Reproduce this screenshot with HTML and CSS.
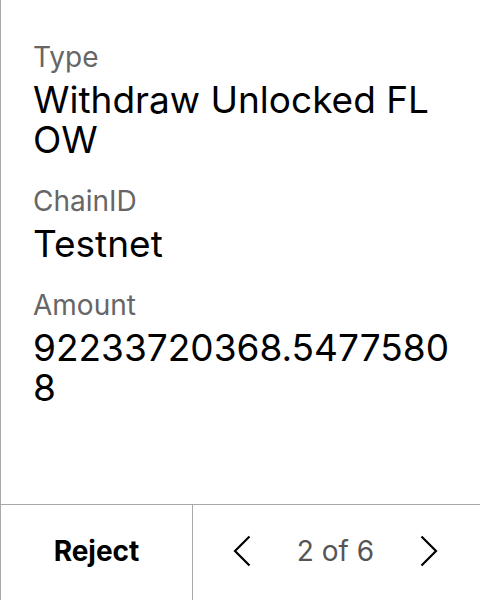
FILE: index.html
```html
<!DOCTYPE html>
<html>
<head>
<meta charset="utf-8">
<link rel="stylesheet" href="styles.css">
</head>
<body>
<div class="screen">
  <div class="details">
    <div class="field">
      <div class="label">Type</div>
      <div class="value">Withdraw Unlocked FLOW</div>
    </div>
    <div class="field">
      <div class="label">ChainID</div>
      <div class="value">Testnet</div>
    </div>
    <div class="field">
      <div class="label">Amount</div>
      <div class="value">92233720368.54775808</div>
    </div>
  </div>
  <div class="footer">
    <div class="reject">Reject</div>
    <div class="pager">
      <svg class="chev" width="20" height="32" viewBox="0 0 20 32"><path d="M17.5 1.5 L3 16 L17.5 30.5" fill="none" stroke="#000" stroke-width="2.2"/></svg>
      <span class="count">2 of 6</span>
      <svg class="chev" width="20" height="32" viewBox="0 0 20 32"><path d="M2.5 1.5 L17 16 L2.5 30.5" fill="none" stroke="#000" stroke-width="2.2"/></svg>
    </div>
  </div>
</div>
</body>
</html>
```
FILE: styles.css
```css
html, body {
  margin: 0;
  padding: 0;
  background: #fff;
}
body {
  font-family: Inter, "Noto Sans", sans-serif;
  color: #000;
}
.screen {
  width: 479px;
  height: 600px;
  border-left: 1px solid #a8a8a8;
  display: flex;
  flex-direction: column;
}
.details {
  flex: 1;
  padding: 40px 28px 0 32px;
  display: flex;
  flex-direction: column;
  gap: 24px;
}
.field {
  display: flex;
  flex-direction: column;
  gap: 6px;
}
.label {
  font-size: 28px;
  line-height: 34px;
  color: #666;
}
.value {
  font-size: 37px;
  line-height: 40px;
  word-break: break-all;
}
.footer {
  height: 95px;
  border-top: 1px solid #a8a8a8;
  display: flex;
}
.reject {
  width: 191px;
  border-right: 1px solid #a8a8a8;
  display: flex;
  align-items: center;
  justify-content: center;
  padding-bottom: 3px;
  font-size: 28px;
  font-weight: 700;
}
.pager {
  flex: 1;
  display: flex;
  align-items: center;
  justify-content: center;
  padding: 0 2px 3px 0;
  gap: 45px;
}
.count {
  font-size: 28px;
  color: #555;
}
```
